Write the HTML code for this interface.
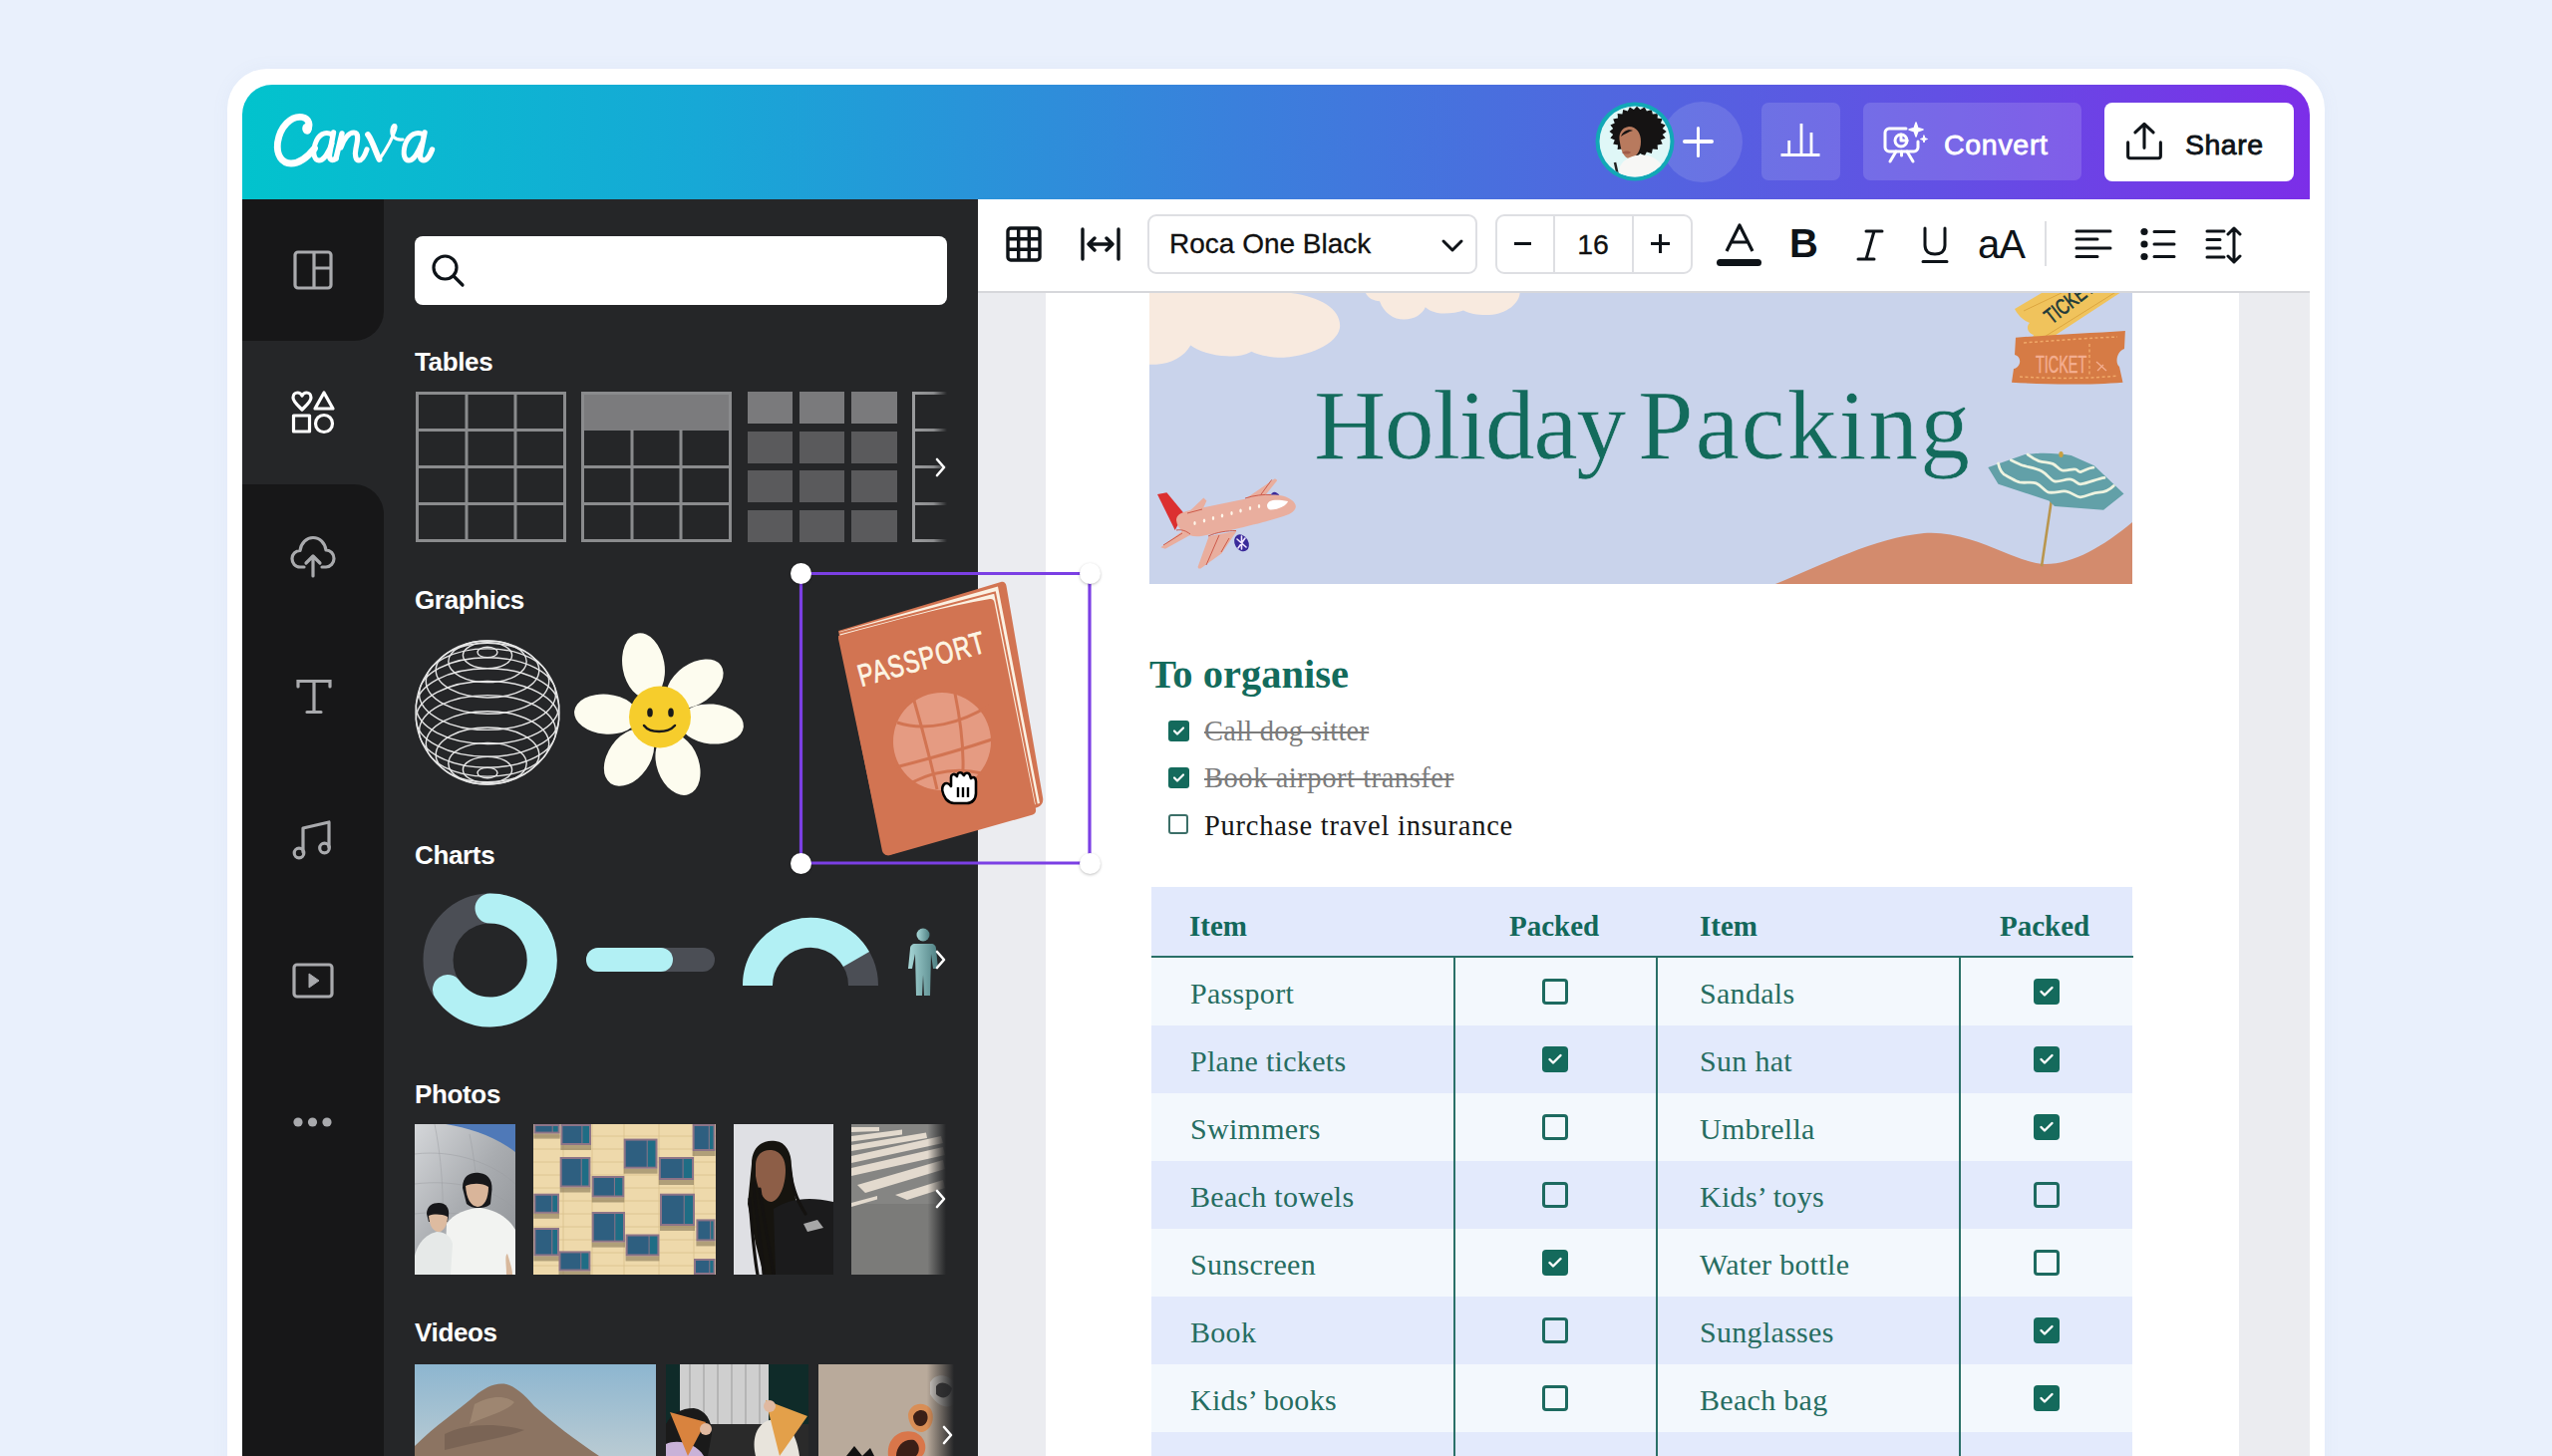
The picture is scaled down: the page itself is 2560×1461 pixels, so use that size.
<!DOCTYPE html>
<html><head><meta charset="utf-8">
<style>
*{margin:0;padding:0;box-sizing:border-box}
html,body{width:2560px;height:1461px;overflow:hidden}
body{background:#e9f0fc;position:relative;font-family:"Liberation Sans",sans-serif}
.a{position:absolute}
.serif{font-family:"Liberation Serif",serif}
#frame{left:228px;top:69px;width:2104px;height:1500px;background:#fff;border-radius:40px;box-shadow:0 0 18px rgba(120,140,190,.06)}
#header{left:243px;top:85px;width:2074px;height:115px;border-radius:30px 30px 0 0;background:linear-gradient(90deg,#02c3cd 0%,#17a8d6 22%,#3a80dc 48%,#5067df 66%,#6250e4 82%,#7c2ee8 100%)}
#rail{left:243px;top:200px;width:142px;height:1300px;background:#252628}
#panel{left:385px;top:200px;width:596px;height:1300px;background:#252628}
#toolbar{left:981px;top:200px;width:1336px;height:94px;background:#fff;border-bottom:2px solid #d6d7db}
#canvas{left:981px;top:294px;width:1336px;height:1200px;background:#ebecf0}
#page{left:1049px;top:294px;width:1197px;height:1200px;background:#fff}
.sel{left:243px;top:342px;width:142px;height:144px;background:#252628}
.rtop{left:355px;top:312px;width:30px;height:30px;background:#171718;border-radius:0 0 30px 0}
.hdr{color:#fff;font-weight:bold;font-size:26px;line-height:1;letter-spacing:-0.35px}
.tb{font-size:28px;color:#111}
.td{font-size:30px;color:#266d61;line-height:1;letter-spacing:0.3px}
.th{font-size:29px;color:#13685b;font-weight:bold;line-height:1}
.cb{width:26px;height:26px;border:3px solid #146a5c;border-radius:4px}
.cbf{width:26px;height:26px;background:#146a5c;border-radius:4px}
</style></head>
<body>
<div class="a" id="frame"></div>
<div class="a" id="header"></div>
<div class="a" id="rail"></div>
<div class="a" id="panel"></div>
<div class="a" id="canvas"></div>
<div class="a" id="page"></div>
<div class="a" id="toolbar"></div>


<!-- RAIL -->
<div class="a" style="left:243px;top:342px;width:142px;height:144px;background:#252628"></div>
<div class="a" style="left:243px;top:200px;width:142px;height:142px;background:#171718;border-radius:0 0 30px 0"></div>
<div class="a" style="left:243px;top:486px;width:142px;height:1000px;background:#171718;border-radius:0 30px 0 0"></div>
<svg class="a" style="left:294px;top:251px" width="40" height="40" viewBox="0 0 40 40" fill="none" stroke="#a9aaad" stroke-width="3.2" stroke-linejoin="round">
<rect x="2" y="2" width="36" height="36" rx="3"/><path d="M21 2 V38 M21 18 H38"/>
</svg>
<svg class="a" style="left:291px;top:391px" width="46" height="46" viewBox="0 0 46 46" fill="none" stroke="#fff" stroke-width="3.2" stroke-linejoin="round">
<path d="M12 20 C8 16 3 12 3 8 C3 5 5 3 7.5 3 C9.5 3 11 4 12 6 C13 4 14.5 3 16.5 3 C19 3 21 5 21 8 C21 12 16 16 12 20Z"/>
<path d="M34 3 L43 19 H25 Z"/>
<rect x="3.5" y="26" width="16" height="16"/>
<circle cx="34" cy="34" r="8.5"/>
</svg>
<svg class="a" style="left:290px;top:536px" width="48" height="44" viewBox="0 0 48 44" fill="none" stroke="#a9aaad" stroke-width="3.2" stroke-linecap="round" stroke-linejoin="round">
<path d="M15 33 H11 C6 33 3 29 3 24.5 C3 20 6.5 16.5 11 16.5 C12 9 17.5 3.5 24 3.5 C31 3.5 36 9 37 16 C41.5 16 45 19.5 45 24.5 C45 29 41.5 33 37 33 H33"/>
<path d="M24 42 V22 M17 29 L24 22 L31 29"/>
</svg>
<svg class="a" style="left:296px;top:680px" width="38" height="38" viewBox="0 0 38 38" fill="none" stroke="#a9aaad" stroke-width="3.2" stroke-linecap="round">
<path d="M3 9 V3.5 H35 V9 M19 3.5 V34.5 M12 34.5 H26"/>
</svg>
<svg class="a" style="left:292px;top:821px" width="44" height="42" viewBox="0 0 44 42" fill="none" stroke="#a9aaad" stroke-width="3.2" stroke-linecap="round" stroke-linejoin="round">
<path d="M12 34 V10 L38 4 V29"/>
<circle cx="8" cy="35" r="4.8"/><circle cx="33.5" cy="30" r="4.8"/>
</svg>
<svg class="a" style="left:292px;top:964px" width="46" height="40" viewBox="0 0 46 40" fill="none" stroke="#a9aaad" stroke-width="3.2" stroke-linejoin="round">
<rect x="3" y="4" width="38" height="32" rx="3"/><path d="M18 13 L28 20 L18 27 Z" fill="#a9aaad" stroke-width="1"/>
</svg>
<svg class="a" style="left:292px;top:1116px" width="44" height="20" viewBox="0 0 44 20" fill="#a9aaad">
<circle cx="7" cy="10" r="4.6"/><circle cx="21.5" cy="10" r="4.6"/><circle cx="36" cy="10" r="4.6"/>
</svg>


<!-- PANEL -->
<div class="a" style="left:416px;top:237px;width:534px;height:69px;background:#fff;border-radius:8px"></div>
<svg class="a" style="left:432px;top:254px" width="36" height="36" viewBox="0 0 36 36" fill="none" stroke="#0e1318" stroke-width="3.2" stroke-linecap="round">
<circle cx="14.5" cy="14.5" r="11.5"/><path d="M23 23 L32 32"/>
</svg>
<div class="a hdr" style="left:416px;top:350px">Tables</div>
<svg class="a" style="left:416px;top:392px" width="540" height="154" viewBox="416 392 540 154">
<g fill="none" stroke="#8a8b8d" stroke-width="3">
<rect x="418.5" y="394.5" width="148" height="148"/>
<path d="M468 394 V543 M517 394 V543 M418 431.5 H567 M418 468.5 H567 M418 505.5 H567"/>
</g>
<rect x="583" y="393" width="151" height="39" fill="#7b7b7d"/>
<g fill="none" stroke="#8a8b8d" stroke-width="3">
<rect x="584.5" y="394.5" width="148" height="148"/>
<path d="M634 431 V543 M683 431 V543 M584 468.5 H733 M584 505.5 H733"/>
</g>
<g fill="#5a5a5c">
<rect x="750" y="393" width="45" height="32" fill="#7a7a7c"/><rect x="802" y="393" width="45" height="32" fill="#7a7a7c"/><rect x="854" y="393" width="46" height="32" fill="#7a7a7c"/>
<rect x="750" y="433" width="45" height="32"/><rect x="802" y="433" width="45" height="32"/><rect x="854" y="433" width="46" height="32"/>
<rect x="750" y="472" width="45" height="32"/><rect x="802" y="472" width="45" height="32"/><rect x="854" y="472" width="46" height="32"/>
<rect x="750" y="512" width="45" height="32"/><rect x="802" y="512" width="45" height="32"/><rect x="854" y="512" width="46" height="32"/>
</g>
<defs><linearGradient id="fd" x1="0" x2="1"><stop offset="0" stop-color="#9a9b9d"/><stop offset="0.6" stop-color="#8a8b8d"/><stop offset="1" stop-color="#252628"/></linearGradient></defs>
<g fill="none" stroke="url(#fd)" stroke-width="3">
<path d="M950 394.5 H916.5 V542.5 H950 M916 431.5 H950 M916 468.5 H950 M916 505.5 H950"/>
</g>
</svg>
<svg class="a" style="left:934px;top:456px" width="20" height="26" viewBox="0 0 20 26" fill="none" stroke="#fff" stroke-width="2.6" stroke-linecap="round" stroke-linejoin="round"><path d="M6 5 L13 13 L6 21"/></svg>

<div class="a hdr" style="left:416px;top:589px">Graphics</div>
<!-- sphere -->
<svg class="a" style="left:413px;top:639px" width="152" height="152" viewBox="-76 -76 152 152"><g fill="none" stroke="#e6e6e6" stroke-width="1.4"><circle cx="0" cy="0" r="72"/><ellipse cx="0" cy="60.5" rx="10.0" ry="5.3"/><ellipse cx="0" cy="57.4" rx="24.6" ry="13.0"/><ellipse cx="0" cy="51.2" rx="39.2" ry="20.8"/><ellipse cx="0" cy="42.4" rx="51.8" ry="27.4"/><ellipse cx="0" cy="31.4" rx="61.7" ry="32.7"/><ellipse cx="0" cy="18.9" rx="68.5" ry="36.3"/><ellipse cx="0" cy="6.4" rx="71.6" ry="37.9"/><ellipse cx="0" cy="-6.4" rx="71.6" ry="37.9"/><ellipse cx="0" cy="-18.9" rx="68.5" ry="36.3"/><ellipse cx="0" cy="-31.4" rx="61.7" ry="32.7"/><ellipse cx="0" cy="-42.4" rx="51.8" ry="27.4"/><ellipse cx="0" cy="-51.2" rx="39.2" ry="20.8"/><ellipse cx="0" cy="-57.4" rx="24.6" ry="13.0"/><ellipse cx="0" cy="-60.5" rx="10.0" ry="5.3"/></g></svg>
<!-- flower -->
<svg class="a" style="left:576px;top:634px" width="180" height="170" viewBox="0 0 180 170">
<g fill="#fdfcef">
<ellipse cx="69.5" cy="34" rx="21" ry="33" transform="rotate(-10 69.5 34)"/>
<ellipse cx="121" cy="52" rx="20" ry="32" transform="rotate(55 121 52)"/>
<ellipse cx="138" cy="92.5" rx="20" ry="32" transform="rotate(95 138 92.5)"/>
<ellipse cx="104" cy="133" rx="21" ry="32" transform="rotate(-20 104 133)"/>
<ellipse cx="55" cy="126" rx="21" ry="32" transform="rotate(35 55 126)"/>
<ellipse cx="32" cy="82.6" rx="20" ry="32" transform="rotate(-85 32 82.6)"/>
</g>
<circle cx="86" cy="85.4" r="31" fill="#f6cd2c"/>
<ellipse cx="76" cy="81" rx="2.8" ry="4.6" fill="#1a1a1a"/><ellipse cx="97" cy="81" rx="2.8" ry="4.6" fill="#1a1a1a"/>
<path d="M70 94 C76 102 94 102 101 94" fill="none" stroke="#1a1a1a" stroke-width="2.5" stroke-linecap="round"/>
</svg>

<div class="a hdr" style="left:416px;top:845px">Charts</div>
<svg class="a" style="left:420px;top:892px" width="530" height="140" viewBox="420 892 530 140">
<circle cx="491.5" cy="963.5" r="52" fill="none" stroke="#4b4e55" stroke-width="30"/>
<path d="M491.5 911.5 A52 52 0 1 1 449 993" fill="none" stroke="#b2f0f4" stroke-width="30" stroke-linecap="round"/>
<rect x="588" y="951" width="129" height="24" rx="12" fill="#4b4e55"/>
<rect x="588" y="951" width="87" height="24" rx="12" fill="#b2f0f4"/>
<path d="M760 989 A53 53 0 0 1 866 989" fill="none" stroke="#4b4e55" stroke-width="30"/>
<path d="M760 989 A53 53 0 0 1 859 962.5" fill="none" stroke="#b2f0f4" stroke-width="30"/>
<defs><linearGradient id="pg" x1="0" x2="1"><stop offset="0" stop-color="#a8d8d8"/><stop offset="1" stop-color="#4e7f82"/></linearGradient></defs>
<g fill="url(#pg)">
<circle cx="926" cy="938" r="6.5"/>
<path d="M918 947 H934 C937 947 939 949 939 952 L941 972 L936 972 L934 957 L933 999 L927 999 L926 978 L925 999 L919 999 L918 957 L915 972 L911 972 L913 952 C913 949 915 947 918 947 Z"/>
</g>
</svg>
<svg class="a" style="left:934px;top:950px" width="20" height="26" viewBox="0 0 20 26" fill="none" stroke="#fff" stroke-width="2.6" stroke-linecap="round" stroke-linejoin="round"><path d="M6 5 L13 13 L6 21"/></svg>

<div class="a hdr" style="left:416px;top:1085px">Photos</div>
<div class="a hdr" style="left:416px;top:1324px">Videos</div>


<!-- PHOTOS -->
<svg class="a" style="left:416px;top:1128px" width="101" height="151" viewBox="0 0 101 151">
<defs><linearGradient id="p1g" x1="0" y1="0" x2="1" y2="1"><stop offset="0" stop-color="#d4d6d9"/><stop offset="0.5" stop-color="#a9acb0"/><stop offset="1" stop-color="#8d9094"/></linearGradient></defs>
<rect width="101" height="151" fill="url(#p1g)"/>
<path d="M31 0 H101 V28 C80 12 55 4 31 0Z" fill="#4f79b8"/>
<g stroke="#9a9da1" stroke-width="0.8" fill="none" opacity=".6"><path d="M0 30 C40 25 80 40 101 60 M0 60 C40 55 80 65 101 85 M0 90 C40 85 80 95 101 110 M20 0 C30 50 30 100 25 151 M55 10 C65 60 65 100 60 151"/></g>
<path d="M48 64 C48 50 58 48 65 49 C75 50 79 58 77 70 L76 80 C72 85 58 86 52 80Z" fill="#17171a"/>
<path d="M51 62 C52 75 56 82 63 83 C70 83 74 74 74 63 C68 59 58 59 51 62Z" fill="#d9b59a"/>
<path d="M12 90 C12 82 18 79 24 79 C32 79 35 85 34 92 L33 98 L14 98Z" fill="#17171a"/>
<path d="M14 92 C15 103 19 108 24 108 C29 108 33 101 33 93 C27 90 19 90 14 92Z" fill="#ddbba0"/>
<path d="M30 151 L32 100 C38 90 54 84 66 84 C82 86 94 94 101 106 V151Z" fill="#f2f3f1"/>
<path d="M0 151 V132 C4 116 14 110 22 108 C30 108 36 112 38 120 L36 151Z" fill="#e6e9e8"/>
<path d="M93 130 C96 140 98 146 98 151 H92 C92 140 90 132 93 130Z" fill="#d8b89c"/>
</svg>
<svg class="a" style="left:535px;top:1128px" width="183" height="151" viewBox="535 1128 183 151">
<rect x="535" y="1128" width="183" height="151" fill="#eed9ab"/>
<g stroke="#d8c08e" stroke-width="0.8"><path d="M535 1140 H718 M535 1153 H718 M535 1166 H718 M535 1179 H718 M535 1192 H718 M535 1205 H718 M535 1218 H718 M535 1231 H718 M535 1244 H718 M535 1257 H718 M535 1270 H718 M565 1128 V1279 M594 1128 V1279 M626 1128 V1279 M661 1128 V1279 M696 1128 V1279"/></g>
<g>
<rect x="535.4" y="1137.6" width="26.3" height="5" fill="#7e7050" opacity=".55"/><rect x="535.4" y="1128.0" width="26.3" height="9.6" fill="#8d7487"/><rect x="537.4" y="1130.0" width="16.3" height="5.6" fill="#2e5f80"/><rect x="554.7" y="1130.0" width="5.0" height="5.6" fill="#1f6d85"/><rect x="562.4" y="1149.0" width="30.6" height="5" fill="#7e7050" opacity=".55"/><rect x="562.4" y="1128.0" width="30.6" height="21.0" fill="#8d7487"/><rect x="564.4" y="1130.0" width="19.0" height="17.0" fill="#2e5f80"/><rect x="584.4" y="1130.0" width="6.6" height="17.0" fill="#1f6d85"/><rect x="625.7" y="1172.7" width="33.8" height="5" fill="#7e7050" opacity=".55"/><rect x="625.7" y="1142.6" width="33.8" height="30.1" fill="#8d7487"/><rect x="627.7" y="1144.6" width="21.0" height="26.1" fill="#2e5f80"/><rect x="649.7" y="1144.6" width="7.8" height="26.1" fill="#1f6d85"/><rect x="694.6" y="1155.0" width="22.9" height="5" fill="#7e7050" opacity=".55"/><rect x="694.6" y="1128.0" width="22.9" height="27.0" fill="#8d7487"/><rect x="696.6" y="1130.0" width="14.2" height="23.0" fill="#2e5f80"/><rect x="711.8" y="1130.0" width="3.7" height="23.0" fill="#1f6d85"/><rect x="561.7" y="1191.5" width="30.7" height="5" fill="#7e7050" opacity=".55"/><rect x="561.7" y="1161.0" width="30.7" height="30.5" fill="#8d7487"/><rect x="563.7" y="1163.0" width="19.0" height="26.5" fill="#2e5f80"/><rect x="583.7" y="1163.0" width="6.7" height="26.5" fill="#1f6d85"/><rect x="660.8" y="1184.0" width="35.2" height="5" fill="#7e7050" opacity=".55"/><rect x="660.8" y="1161.0" width="35.2" height="23.0" fill="#8d7487"/><rect x="662.8" y="1163.0" width="21.8" height="19.0" fill="#2e5f80"/><rect x="685.6" y="1163.0" width="8.4" height="19.0" fill="#1f6d85"/><rect x="593.7" y="1201.5" width="32.6" height="5" fill="#7e7050" opacity=".55"/><rect x="593.7" y="1180.0" width="32.6" height="21.5" fill="#8d7487"/><rect x="595.7" y="1182.0" width="20.2" height="17.5" fill="#2e5f80"/><rect x="616.9" y="1182.0" width="7.4" height="17.5" fill="#1f6d85"/><rect x="535.4" y="1217.8" width="25.6" height="5" fill="#7e7050" opacity=".55"/><rect x="535.4" y="1197.7" width="25.6" height="20.1" fill="#8d7487"/><rect x="537.4" y="1199.7" width="15.9" height="16.1" fill="#2e5f80"/><rect x="554.3" y="1199.7" width="4.7" height="16.1" fill="#1f6d85"/><rect x="662.0" y="1230.0" width="35.0" height="5" fill="#7e7050" opacity=".55"/><rect x="662.0" y="1197.7" width="35.0" height="32.3" fill="#8d7487"/><rect x="664.0" y="1199.7" width="21.7" height="28.3" fill="#2e5f80"/><rect x="686.7" y="1199.7" width="8.3" height="28.3" fill="#1f6d85"/><rect x="593.7" y="1246.6" width="33.3" height="5" fill="#7e7050" opacity=".55"/><rect x="593.7" y="1216.0" width="33.3" height="30.6" fill="#8d7487"/><rect x="595.7" y="1218.0" width="20.6" height="26.6" fill="#2e5f80"/><rect x="617.3" y="1218.0" width="7.7" height="26.6" fill="#1f6d85"/><rect x="535.4" y="1260.4" width="25.6" height="5" fill="#7e7050" opacity=".55"/><rect x="535.4" y="1232.0" width="25.6" height="28.4" fill="#8d7487"/><rect x="537.4" y="1234.0" width="15.9" height="24.4" fill="#2e5f80"/><rect x="554.3" y="1234.0" width="4.7" height="24.4" fill="#1f6d85"/><rect x="698.4" y="1245.4" width="19.1" height="5" fill="#7e7050" opacity=".55"/><rect x="698.4" y="1223.4" width="19.1" height="22.0" fill="#8d7487"/><rect x="700.4" y="1225.4" width="11.8" height="18.0" fill="#2e5f80"/><rect x="713.2" y="1225.4" width="2.3" height="18.0" fill="#1f6d85"/><rect x="627.6" y="1260.4" width="33.8" height="5" fill="#7e7050" opacity=".55"/><rect x="627.6" y="1238.5" width="33.8" height="21.9" fill="#8d7487"/><rect x="629.6" y="1240.5" width="21.0" height="17.9" fill="#2e5f80"/><rect x="651.6" y="1240.5" width="7.8" height="17.9" fill="#1f6d85"/><rect x="560.5" y="1275.5" width="31.9" height="5" fill="#7e7050" opacity=".55"/><rect x="560.5" y="1255.4" width="31.9" height="20.1" fill="#8d7487"/><rect x="562.5" y="1257.4" width="19.8" height="16.1" fill="#2e5f80"/><rect x="583.3" y="1257.4" width="7.1" height="16.1" fill="#1f6d85"/><rect x="696.0" y="1279.0" width="21.5" height="5" fill="#7e7050" opacity=".55"/><rect x="696.0" y="1263.0" width="21.5" height="16.0" fill="#8d7487"/><rect x="698.0" y="1265.0" width="13.3" height="12.0" fill="#2e5f80"/><rect x="712.3" y="1265.0" width="3.2" height="12.0" fill="#1f6d85"/></g></svg>
<svg class="a" style="left:736px;top:1128px" width="100" height="151" viewBox="0 0 100 151">
<rect width="100" height="151" fill="#dfe0e4"/>
<path d="M18 40 C18 22 30 15 42 17 C52 18 58 28 58 42 L62 75 L66 151 H30 L22 120 L14 80 Z" fill="#16140f"/>
<path d="M22 42 C22 30 30 25 38 26 C48 27 52 36 52 46 C52 62 46 76 38 78 C30 78 24 66 22 52Z" fill="#8d5e47"/>
<path d="M40 85 C55 75 75 72 100 78 V151 H42 Z" fill="#1b1b1c"/>
<path d="M70 100 L84 96 L90 104 L74 108Z" fill="#e2e2e2" opacity=".7"/>
<g stroke="#141210" stroke-width="3.2" fill="none" stroke-linecap="round"><path d="M20 60 C22 90 28 120 30 150 M26 65 C30 95 36 125 40 151 M16 75 C18 100 20 130 24 151 M56 45 C60 70 66 80 72 90"/></g>
</svg>
<svg class="a" style="left:854px;top:1128px" width="98" height="151" viewBox="0 0 98 151">
<defs><linearGradient id="p4f" x1="0" x2="1"><stop offset="0" stop-color="#252628" stop-opacity="0"/><stop offset="0.78" stop-color="#252628" stop-opacity="0"/><stop offset="0.97" stop-color="#252628" stop-opacity="1"/></linearGradient></defs>
<rect width="98" height="151" fill="#7b7b79"/>
<rect width="98" height="80" fill="#858583"/>
<g fill="#e3dace">
<path d="M0 3 L28 3 L28 7 L0 8Z"/>
<path d="M0 12 L51 5.5 L51 10.5 L0 17.5Z"/>
<path d="M0 21 L75 8.5 L76 14 L0 27Z"/>
<path d="M0 32 L90 12 L92 19 L0 39Z"/>
<path d="M0 44 L92 23 L94 31 L0 52Z"/>
<path d="M6 61 L92 36 L94 45 L14 69Z"/>
<path d="M44 71 L92 56 L94 64 L56 76Z"/>
<path d="M0 79 L26 72 L26 75.5 L0 83Z"/>
</g>
<rect width="98" height="151" fill="url(#p4f)"/>
</svg>
<svg class="a" style="left:934px;top:1190px" width="20" height="26" viewBox="0 0 20 26" fill="none" stroke="#fff" stroke-width="2.6" stroke-linecap="round" stroke-linejoin="round"><path d="M6 5 L13 13 L6 21"/></svg>
<!-- VIDEOS -->
<svg class="a" style="left:416px;top:1369px" width="242" height="92" viewBox="0 0 242 92">
<defs><linearGradient id="v1s" x1="0" y1="0" x2="0" y2="1"><stop offset="0" stop-color="#8db6d0"/><stop offset="1" stop-color="#b9cbd3"/></linearGradient></defs>
<rect width="242" height="92" fill="url(#v1s)"/>
<path d="M0 82 C20 62 45 45 60 32 C70 24 80 18 92 20 C100 22 110 30 120 42 C140 60 160 75 185 92 H0Z" fill="#8c7462"/>
<path d="M60 40 C75 32 90 30 100 38 C92 48 70 52 55 60Z" fill="#a58e78" opacity=".7"/>
<path d="M30 70 C50 60 80 58 110 66 C90 74 60 78 30 86Z" fill="#6e5a4c" opacity=".6"/>
</svg>
<svg class="a" style="left:668px;top:1369px" width="143" height="92" viewBox="0 0 143 92">
<rect width="143" height="92" fill="#0f2b29"/>
<rect x="14" y="0" width="89" height="60" fill="#cfcfcf"/>
<g stroke="#b5b5b5" stroke-width="2"><path d="M24 0 V60 M38 0 V60 M52 0 V60 M66 0 V60 M80 0 V60 M94 0 V60"/></g>
<rect x="0" y="60" width="143" height="32" fill="#2a2a2a"/>
<path d="M0 60 C5 50 15 44 28 44 C40 46 46 56 46 70 L42 92 H0Z" fill="#1a1a1a"/>
<path d="M0 80 C10 75 30 78 38 92 H0Z" fill="#c9b2d8"/>
<path d="M4 48 L40 58 L22 92 Z" fill="#d9833e"/>
<path d="M90 92 C86 76 90 60 104 56 C118 54 130 64 134 92Z" fill="#e8e4dc"/>
<path d="M100 36 L142 52 L114 92 Z" fill="#e3a04a"/>
<circle cx="104" cy="42" r="6" fill="#e0b9a0"/>
<circle cx="40" cy="65" r="6" fill="#e0b9a0"/>
</svg>
<svg class="a" style="left:821px;top:1369px" width="136" height="92" viewBox="0 0 136 92">
<defs><linearGradient id="v3f" x1="0" x2="1"><stop offset="0" stop-color="#252628" stop-opacity="0"/><stop offset="0.8" stop-color="#252628" stop-opacity="0"/><stop offset="1" stop-color="#252628" stop-opacity="1"/></linearGradient></defs>
<rect width="136" height="92" fill="#b9aa9b"/>
<path d="M112 18 C118 8 130 10 136 18 V40 C128 46 118 40 112 30Z" fill="#cfcac4"/>
<path d="M118 22 C122 16 130 18 134 24 C132 34 124 36 118 30Z" fill="#3a3838"/>
<path d="M90 50 C92 40 104 36 112 44 C118 52 114 66 104 68 C96 68 90 60 90 50Z" fill="#d98e56"/>
<path d="M95 52 C97 46 104 44 108 48 C112 54 108 62 102 62 C98 62 95 58 95 52Z" fill="#3b1f17"/>
<path d="M70 92 C68 76 80 64 96 68 C108 72 110 86 104 92Z" fill="#d9764a"/>
<path d="M78 92 C78 82 86 74 96 76 C102 80 102 88 98 92Z" fill="#3b1f17"/>
<path d="M28 92 L36 82 L44 92 L52 84 L56 92Z" fill="#111"/>
<rect width="136" height="92" fill="url(#v3f)"/>
</svg>
<svg class="a" style="left:941px;top:1427px" width="20" height="26" viewBox="0 0 20 26" fill="none" stroke="#fff" stroke-width="2.6" stroke-linecap="round" stroke-linejoin="round"><path d="M6 5 L13 13 L6 21"/></svg>


<!-- TOOLBAR -->
<svg class="a" style="left:1008px;top:226px" width="38" height="38" viewBox="0 0 38 38" fill="none" stroke="#0e1318" stroke-width="3.4" stroke-linejoin="round">
<rect x="3" y="3" width="32" height="32" rx="3"/><path d="M13.7 3 V35 M24.3 3 V35 M3 13.7 H35 M3 24.3 H35"/>
</svg>
<svg class="a" style="left:1082px;top:226px" width="44" height="38" viewBox="0 0 44 38" fill="none" stroke="#0e1318" stroke-width="3.4" stroke-linecap="round" stroke-linejoin="round">
<path d="M4 4 V34 M40 4 V34 M11 19 H33 M16 13 L10 19 L16 25 M28 13 L34 19 L28 25"/>
</svg>
<div class="a" style="left:1151px;top:215px;width:331px;height:60px;border:2px solid #dedfe3;border-radius:9px"></div>
<div class="a tb" style="left:1173px;top:229px;line-height:32px;font-size:28px;letter-spacing:0px;-webkit-text-stroke:0.3px #111">Roca One Black</div>
<svg class="a" style="left:1444px;top:236px" width="26" height="20" viewBox="0 0 26 20" fill="none" stroke="#0e1318" stroke-width="3" stroke-linecap="round" stroke-linejoin="round"><path d="M4 6 L13 15 L22 6"/></svg>
<div class="a" style="left:1500px;top:215px;width:198px;height:60px;border:2px solid #dedfe3;border-radius:9px"></div>
<div class="a" style="left:1558px;top:215px;width:2px;height:60px;background:#dedfe3"></div>
<div class="a" style="left:1637px;top:215px;width:2px;height:60px;background:#dedfe3"></div>
<div class="a" style="left:1519px;top:243px;width:17px;height:3px;background:#0e1318"></div>
<div class="a tb" style="left:1559px;top:229px;width:78px;text-align:center;line-height:32px;font-size:28.5px;-webkit-text-stroke:0.3px #111">16</div>
<div class="a" style="left:1656px;top:243px;width:19px;height:3px;background:#0e1318"></div>
<div class="a" style="left:1664px;top:235px;width:3px;height:19px;background:#0e1318"></div>
<svg class="a" style="left:1718px;top:222px" width="54" height="50" viewBox="0 0 54 50" fill="none">
<path d="M14 30 L27 4 L40 30 M18.5 21 H35.5" stroke="#0e1318" stroke-width="3.2" stroke-linejoin="round"/>
<rect x="4" y="38" width="45" height="7" rx="3.5" fill="#0e1318"/>
</svg>
<div class="a" style="left:1795px;top:222px;font-size:40px;font-weight:bold;color:#0e1318;line-height:44px">B</div>
<svg class="a" style="left:1860px;top:228px" width="32" height="36" viewBox="0 0 32 36" fill="none" stroke="#0e1318" stroke-width="3" stroke-linecap="round">
<path d="M12 4 H28 M4 32 H20 M20 4 L12 32"/>
</svg>
<svg class="a" style="left:1926px;top:226px" width="30" height="40" viewBox="0 0 30 40" fill="none" stroke="#0e1318" stroke-width="3" stroke-linecap="round">
<path d="M5 3 V20 C5 26 9 29 15 29 C21 29 25 26 25 20 V3 M3 36.5 H27"/>
</svg>
<div class="a" style="left:1984px;top:223px;font-size:40px;color:#0e1318;line-height:44px;letter-spacing:-1px">aA</div>
<div class="a" style="left:2051px;top:222px;width:2px;height:45px;background:#dedfe3"></div>
<svg class="a" style="left:2080px;top:228px" width="40" height="34" viewBox="0 0 40 34" fill="none" stroke="#0e1318" stroke-width="3" stroke-linecap="round">
<path d="M3 4 H37 M3 12 H24 M3 21 H37 M3 29.5 H24"/>
</svg>
<svg class="a" style="left:2146px;top:228px" width="38" height="34" viewBox="0 0 38 34" fill="#0e1318" stroke="#0e1318" stroke-width="3" stroke-linecap="round">
<circle cx="5" cy="4.5" r="3.6" stroke="none"/><circle cx="5" cy="17" r="3.6" stroke="none"/><circle cx="5" cy="29.5" r="3.6" stroke="none"/>
<path d="M15 4.5 H35 M15 17 H35 M15 29.5 H35" fill="none"/>
</svg>
<svg class="a" style="left:2211px;top:226px" width="40" height="40" viewBox="0 0 40 40" fill="none" stroke="#0e1318" stroke-width="3" stroke-linecap="round" stroke-linejoin="round">
<path d="M3 6 H20 M3 14.5 H16 M3 23 H16 M3 32 H20 M30 3 V37 M24 9 L30 3 L36 9 M24 31 L30 37 L36 31"/>
</svg>


<!-- BANNER -->
<svg class="a" style="left:1153px;top:294px" width="986" height="292" viewBox="1153 294 986 292">
<rect x="1153" y="294" width="986" height="292" fill="#c9d3eb"/>
<path d="M1153 294 H1295 C1325 298 1344 310 1344.2 326.7 C1344 342 1320 356 1287.6 358.8 C1275 359 1262 356 1255.5 352.7 C1248 357 1238 358 1231 357.3 C1215 357 1202 352 1194.3 346.6 C1188 358 1175 365 1160 365.7 L1153 365.7 Z" fill="#f8eadf"/>
<path d="M1370 294 C1372 299 1378 302 1384 302.2 C1388 314 1398 320.6 1408.4 320.6 C1419 320.6 1427 315 1429.8 308.3 C1435 313 1442 314.5 1448.2 314.5 C1456 314.5 1463 313.5 1468 311.5 C1474 315 1485 316.5 1494 316 C1512 315 1524 304 1524.6 294 Z" fill="#f8eadf"/>
<path d="M1781 586 C1830 566 1880 540 1930 535 C1960 533 1985 544 2010 554 C2025 560 2040 566 2052 566 C2080 566 2110 548 2139 524 V586 Z" fill="#d38b6d"/>
<!-- umbrella -->
<path d="M2058.2 499.7 L2048 568.3" stroke="#b9964e" stroke-width="2.6"/>
<path d="M1994.3 469.1 L2031.3 456.1 C2040 455 2045 454.7 2049.9 454.7 C2060 455 2070 455.5 2077.7 457 L2100.8 467.2 L2130.5 495.5 L2110.1 511.7 L2061 508 L2055.4 502.5 L2004.5 485.8 Z" fill="#62a0a8"/>
<g fill="none" stroke="#eef3e0" stroke-width="2.8" stroke-linecap="round" stroke-linejoin="round">
<path d="M2004.5 465 C2006 472 2009 476 2012.8 477.4 C2018 480 2022 483 2025.8 483.9 C2032 485 2038 483 2042.5 484.9 C2048 487 2051 493 2055.4 494.1 C2062 495 2068 492 2073 493.2 C2079 494.5 2083 499 2087 498.8 C2094 498 2100 494 2105.5 494.1 C2112 494 2117 491 2120.3 487.6"/>
<path d="M2017.4 461.7 C2022 464 2026 466 2029.5 467.2 C2036 469 2043 470 2048 472.8 C2054 476 2057 482 2061 483 C2067 484 2072 480 2077.7 481.1 C2082 482 2084 486 2087 485.8 C2095 485 2104 480 2111 479.3"/>
<path d="M2034.1 456.1 C2038 459 2041 461 2045.2 462.6 C2050 464 2055 464 2059.1 465.4 C2063 467 2065 471 2068.4 471.9 C2074 473 2078 470 2082.3 471 C2084 471.5 2085 474 2087 473.7 C2092 472 2096 469 2100 469.1"/>
</g>
<ellipse cx="2067.5" cy="456" rx="2.2" ry="3" fill="#c9a040"/>
<!-- tickets -->
<defs><clipPath id="bclip"><rect x="1153" y="293" width="986" height="293"/></clipPath></defs>
<g clip-path="url(#bclip)">
<path d="M2021 310 L2075 278 L2140 250 L2150 275 L2128 293 L2044 348 C2040 344 2038 340 2040 336 C2034 334 2032 328 2036 324 C2030 322 2024 316 2021 310Z" fill="#f0c35c"/>
<path d="M2030 312 L2135 262 M2046 341 L2140 282" stroke="#dca640" stroke-width="1" fill="none"/>
<text x="0" y="0" font-family="Liberation Sans" font-size="22" fill="#1e3a3a" transform="translate(2058 326) rotate(-38) scale(0.72 1)" stroke="#1e3a3a" stroke-width="0.6">TICKET</text>
</g>
<path d="M2022 338.7 C2060 336 2100 334 2131.9 332 L2131 350 C2124 352 2121 364 2126 368 L2129.5 383.7 C2100 386 2060 386.5 2018 383.7 L2020 370 C2027 369 2029 358 2021 356 Z" fill="#d67b45"/>
<path d="M2030 344 C2070 341 2100 339 2124 338 M2026 378 C2060 380 2095 380 2125 377 M2096 345 V376" stroke="#f0a868" stroke-width="1.5" fill="none" stroke-dasharray="3 2.5"/>
<text x="0" y="0" font-family="Liberation Sans" font-size="24" fill="#f4ae90" transform="translate(2042 374) scale(0.6 1)" stroke="#f4ae90" stroke-width="0.5">TICKET</text>
<path d="M2103 363 L2113 372 M2104 372 L2110 366" stroke="#f4ae90" stroke-width="1.2"/>
<!-- airplane -->
<g>
<path d="M1161 496 L1170.4 494.2 L1187.8 515.3 L1178.7 532Z" fill="#dc3030"/>
<path d="M1249.7 500.2 L1278.4 480.6 C1280 480 1281.5 481.5 1280.7 482.8 L1267.8 498.7Z" fill="#e9ae9e"/>
<path d="M1274.6 497 C1276 493 1280 492 1283.7 497.5 L1280 499Z" fill="#3a2a9a"/>
<path d="M1190.8 515.3 L1207.4 499.5 L1210.4 502.5 L1205.9 512.3Z" fill="#e9ae9e"/>
<path d="M1164.4 549.3 L1186.3 532.7 L1194.6 536.5 L1168.9 550.8Z" fill="#e9ae9e"/>
<path d="M1180 522 C1180 516 1186 514 1194 512 L1262 498 C1275 495.5 1288 495.5 1296 502 C1302 507 1301 512 1293 516 C1275 523 1250 528 1235 532 L1205 538 C1192 540 1181 532 1180 522Z" fill="#e9ae9e"/>
<path d="M1212.7 538 L1240.6 532.7 L1225.5 555.3 L1204.4 570.5 C1202 571 1201 569 1202.1 567.4Z" fill="#e9ae9e"/>
<g stroke="#c9503f" stroke-width="0.9" fill="none">
<path d="M1249 500 C1258 497 1268 496 1275 496.5"/><path d="M1275.8 481.3 L1264.8 496.4"/>
<path d="M1212 538 C1220 534 1232 532.5 1240 532.5"/><path d="M1223 537 L1210 567"/><path d="M1233 540 L1225 554"/>
<path d="M1167 547 L1186 535"/><path d="M1180 532 C1186 531 1190 533 1194 536"/><path d="M1191 515 L1206 511"/>
</g>
<path d="M1271 507 C1272 502 1278 500.5 1292 503 C1290 509 1278 512 1274 511.5 C1272 511 1271 509 1271 507Z" fill="#fff"/>
<g fill="#fff6ea">
<ellipse cx="1198.5" cy="525" rx="1.2" ry="1.9"/><ellipse cx="1208" cy="522.5" rx="1.2" ry="1.9"/><ellipse cx="1217" cy="520" rx="1.2" ry="1.9"/><ellipse cx="1226" cy="517.5" rx="1.2" ry="1.9"/><ellipse cx="1235.5" cy="515" rx="1.2" ry="1.9"/><ellipse cx="1244.5" cy="512.5" rx="1.2" ry="1.9"/><ellipse cx="1254" cy="510" rx="1.2" ry="1.9"/><ellipse cx="1263" cy="508" rx="1.2" ry="1.9"/>
</g>
<ellipse cx="1245.5" cy="544.8" rx="6.8" ry="9" transform="rotate(-30 1245.5 544.8)" fill="#3a2a9a"/>
<g stroke="#f0e6ff" stroke-width="1.6" stroke-linecap="round"><path d="M1241 541 L1250 549 M1249 540 L1242 550 M1245.5 538 L1245.5 551"/></g>
</g></svg>
<div class="a serif" style="left:1318px;top:372px;font-size:100px;color:#136b5c;line-height:110px;white-space:nowrap;letter-spacing:-1.5px;-webkit-text-stroke:0.6px #c9d3eb">Holiday</div><div class="a serif" style="left:1643px;top:372px;font-size:100px;color:#136b5c;line-height:110px;white-space:nowrap;letter-spacing:1.8px;-webkit-text-stroke:0.6px #c9d3eb">Packing</div>

<!-- TO ORGANISE -->
<div class="a serif" style="left:1153px;top:654px;font-size:40.5px;color:#136b5c;font-weight:bold;line-height:46px;white-space:nowrap">To organise</div>
<div class="a cbf" style="left:1172px;top:723px;width:21px;height:21px;border-radius:3px"></div>
<svg class="a" style="left:1172px;top:723px" width="21" height="21" viewBox="0 0 21 21" fill="none" stroke="#fff" stroke-width="2.2" stroke-linecap="round" stroke-linejoin="round"><path d="M6 10.5 L9 13.5 L15 7.5"/></svg>
<div class="a serif" style="left:1208px;top:717px;font-size:28.5px;color:#7b7b7b;line-height:34px;letter-spacing:0.25px;text-decoration:line-through;text-decoration-thickness:1.6px;white-space:nowrap">Call dog sitter</div>
<div class="a cbf" style="left:1172px;top:770px;width:21px;height:21px;border-radius:3px"></div>
<svg class="a" style="left:1172px;top:770px" width="21" height="21" viewBox="0 0 21 21" fill="none" stroke="#fff" stroke-width="2.2" stroke-linecap="round" stroke-linejoin="round"><path d="M6 10.5 L9 13.5 L15 7.5"/></svg>
<div class="a serif" style="left:1208px;top:764px;font-size:28.5px;color:#7b7b7b;line-height:34px;letter-spacing:0.55px;text-decoration:line-through;text-decoration-thickness:1.6px;white-space:nowrap">Book airport transfer</div>
<div class="a" style="left:1172px;top:817px;width:20px;height:20px;border:2.5px solid #3c6f68;border-radius:3px"></div>
<div class="a serif" style="left:1208px;top:812px;font-size:28.5px;color:#161616;line-height:34px;letter-spacing:0.75px;white-space:nowrap">Purchase travel insurance</div>
<!-- TABLE -->
<div class="a" style="left:1155px;top:890px;width:984px;height:71px;background:#e2e9fc"></div>
<div class="a th serif" style="left:1193px;top:915px">Item</div>
<div class="a th serif" style="left:1514px;top:915px">Packed</div>
<div class="a th serif" style="left:1705px;top:915px">Item</div>
<div class="a th serif" style="left:2006px;top:915px">Packed</div>
<div class="a" style="left:1155px;top:961px;width:984px;height:68px;background:#f3f8fd"></div>
<div class="a td serif" style="left:1194px;top:982px;white-space:nowrap">Passport</div>
<div class="a td serif" style="left:1705px;top:982px;white-space:nowrap">Sandals</div>
<div class="a" style="left:1547px;top:982px;width:26px;height:26px;border:3px solid #1d6a60;border-radius:4px"></div>
<svg class="a" style="left:2040px;top:982px" width="26" height="26" viewBox="0 0 26 26"><rect width="26" height="26" rx="4" fill="#146a5c"/><path d="M7.5 13 L11 16.5 L18.5 9" fill="none" stroke="#fff" stroke-width="2.4" stroke-linecap="round" stroke-linejoin="round"/></svg>
<div class="a" style="left:1155px;top:1029px;width:984px;height:68px;background:#e3eafc"></div>
<div class="a td serif" style="left:1194px;top:1050px;white-space:nowrap">Plane tickets</div>
<div class="a td serif" style="left:1705px;top:1050px;white-space:nowrap">Sun hat</div>
<svg class="a" style="left:1547px;top:1050px" width="26" height="26" viewBox="0 0 26 26"><rect width="26" height="26" rx="4" fill="#146a5c"/><path d="M7.5 13 L11 16.5 L18.5 9" fill="none" stroke="#fff" stroke-width="2.4" stroke-linecap="round" stroke-linejoin="round"/></svg>
<svg class="a" style="left:2040px;top:1050px" width="26" height="26" viewBox="0 0 26 26"><rect width="26" height="26" rx="4" fill="#146a5c"/><path d="M7.5 13 L11 16.5 L18.5 9" fill="none" stroke="#fff" stroke-width="2.4" stroke-linecap="round" stroke-linejoin="round"/></svg>
<div class="a" style="left:1155px;top:1097px;width:984px;height:68px;background:#f3f8fd"></div>
<div class="a td serif" style="left:1194px;top:1118px;white-space:nowrap">Swimmers</div>
<div class="a td serif" style="left:1705px;top:1118px;white-space:nowrap">Umbrella</div>
<div class="a" style="left:1547px;top:1118px;width:26px;height:26px;border:3px solid #1d6a60;border-radius:4px"></div>
<svg class="a" style="left:2040px;top:1118px" width="26" height="26" viewBox="0 0 26 26"><rect width="26" height="26" rx="4" fill="#146a5c"/><path d="M7.5 13 L11 16.5 L18.5 9" fill="none" stroke="#fff" stroke-width="2.4" stroke-linecap="round" stroke-linejoin="round"/></svg>
<div class="a" style="left:1155px;top:1165px;width:984px;height:68px;background:#e3eafc"></div>
<div class="a td serif" style="left:1194px;top:1186px;white-space:nowrap">Beach towels</div>
<div class="a td serif" style="left:1705px;top:1186px;white-space:nowrap">Kids’ toys</div>
<div class="a" style="left:1547px;top:1186px;width:26px;height:26px;border:3px solid #1d6a60;border-radius:4px"></div>
<div class="a" style="left:2040px;top:1186px;width:26px;height:26px;border:3px solid #1d6a60;border-radius:4px"></div>
<div class="a" style="left:1155px;top:1233px;width:984px;height:68px;background:#f3f8fd"></div>
<div class="a td serif" style="left:1194px;top:1254px;white-space:nowrap">Sunscreen</div>
<div class="a td serif" style="left:1705px;top:1254px;white-space:nowrap">Water bottle</div>
<svg class="a" style="left:1547px;top:1254px" width="26" height="26" viewBox="0 0 26 26"><rect width="26" height="26" rx="4" fill="#146a5c"/><path d="M7.5 13 L11 16.5 L18.5 9" fill="none" stroke="#fff" stroke-width="2.4" stroke-linecap="round" stroke-linejoin="round"/></svg>
<div class="a" style="left:2040px;top:1254px;width:26px;height:26px;border:3px solid #1d6a60;border-radius:4px"></div>
<div class="a" style="left:1155px;top:1301px;width:984px;height:68px;background:#e3eafc"></div>
<div class="a td serif" style="left:1194px;top:1322px;white-space:nowrap">Book</div>
<div class="a td serif" style="left:1705px;top:1322px;white-space:nowrap">Sunglasses</div>
<div class="a" style="left:1547px;top:1322px;width:26px;height:26px;border:3px solid #1d6a60;border-radius:4px"></div>
<svg class="a" style="left:2040px;top:1322px" width="26" height="26" viewBox="0 0 26 26"><rect width="26" height="26" rx="4" fill="#146a5c"/><path d="M7.5 13 L11 16.5 L18.5 9" fill="none" stroke="#fff" stroke-width="2.4" stroke-linecap="round" stroke-linejoin="round"/></svg>
<div class="a" style="left:1155px;top:1369px;width:984px;height:68px;background:#f3f8fd"></div>
<div class="a td serif" style="left:1194px;top:1390px;white-space:nowrap">Kids’ books</div>
<div class="a td serif" style="left:1705px;top:1390px;white-space:nowrap">Beach bag</div>
<div class="a" style="left:1547px;top:1390px;width:26px;height:26px;border:3px solid #1d6a60;border-radius:4px"></div>
<svg class="a" style="left:2040px;top:1390px" width="26" height="26" viewBox="0 0 26 26"><rect width="26" height="26" rx="4" fill="#146a5c"/><path d="M7.5 13 L11 16.5 L18.5 9" fill="none" stroke="#fff" stroke-width="2.4" stroke-linecap="round" stroke-linejoin="round"/></svg>
<div class="a" style="left:1155px;top:1437px;width:984px;height:68px;background:#e3eafc"></div>
<div class="a" style="left:1155px;top:959px;width:985px;height:2px;background:#2a7068"></div>
<div class="a" style="left:1457.5px;top:960px;width:2px;height:520px;background:#2a7068"></div>
<div class="a" style="left:1660.5px;top:960px;width:2px;height:520px;background:#2a7068"></div>
<div class="a" style="left:1964.5px;top:960px;width:2px;height:520px;background:#2a7068"></div>


<!-- PASSPORT -->
<svg class="a" style="left:790px;top:565px" width="320" height="310" viewBox="790 565 320 310">
<path d="M803.5 575.5 H1093 V866 H803.5 Z" fill="none" stroke="#7b3fe4" stroke-width="3.2"/>
<path d="M841 633 L1004 584 C1007 583 1009 585 1009.5 588 L1046 800 C1047 805 1045 808 1041 810 L892 858 C889 859 886 857 885 854 Z" fill="#d27452"/>
<path d="M842 634 L1001 588.5 L1043 806 L1000 818 L890 856Z" fill="#fbf1e2"/>
<path d="M842 635.5 L998 594.5 L1040 808" fill="none" stroke="#d27452" stroke-width="2"/>
<path d="M841 638 C900 622 950 608 993 601 C995.5 600.5 997 602 997.5 604.5 L1039 812 C1039.5 814.5 1038.5 816.5 1036 817.5 L893 858 C890 859 887 857 886 854 L841 641 Z" fill="#d27452"/>
<circle cx="945" cy="744" r="49" fill="#e59b82"/>
<g fill="none" stroke="#d27452" stroke-width="3">
<path d="M900 725 C930 735 965 725 992 708"/>
<path d="M898 770 C930 762 965 752 995 742"/>
<path d="M915 696 C925 730 935 770 940 792"/>
<path d="M958 696 C965 730 968 760 965 790"/>
<path d="M915 785 C935 775 960 770 985 776"/>
</g>
<text x="0" y="0" font-family="Liberation Sans" font-size="31" fill="#fdf5e4" stroke="#fdf5e4" stroke-width="0.8" transform="translate(864 689) rotate(-15.5) scale(0.74 1)" letter-spacing="1.5">PASSPORT</text>
<!-- cursor -->
<g transform="translate(943 772)">
<path d="M6 30 C2 24 1 18 4 15 C6 13 9 14 11 17 L11 8 C11 5 14 4 16 6 L17 7 C17 3 21 2 23 5 L24 6 C25 3 29 3 30 6 L31 9 C33 7 36 8 36 12 L36 24 C36 30 32 34 27 34 L14 34 C11 34 8 32 6 30Z" fill="#fff" stroke="#000" stroke-width="2.6" stroke-linejoin="round"/>
<path d="M18 18 V28 M23 18 V28 M28 18 V28" stroke="#000" stroke-width="2.4"/>
</g>
</svg>
<div class="a" style="left:793px;top:565px;width:21px;height:21px;border-radius:50%;background:#fff;box-shadow:0 1px 3px rgba(0,0,0,.25)"></div>
<div class="a" style="left:1083px;top:565px;width:21px;height:21px;border-radius:50%;background:#fff;box-shadow:0 1px 3px rgba(0,0,0,.25)"></div>
<div class="a" style="left:793px;top:856px;width:21px;height:21px;border-radius:50%;background:#fff;box-shadow:0 1px 3px rgba(0,0,0,.25)"></div>
<div class="a" style="left:1083px;top:856px;width:21px;height:21px;border-radius:50%;background:#fff;box-shadow:0 1px 3px rgba(0,0,0,.25)"></div>

<!-- LOGO -->
<svg class="a" style="left:265px;top:105px" width="180" height="70" viewBox="265 105 180 70">
<g fill="none" stroke="#fff" stroke-linecap="round" stroke-linejoin="round">
<path d="M308.5 131 C311 126 311 119 303 117.5 C292 116 281 127 278.5 143 C277 156 283 164 292 164 C301 164 309 157 315.5 149" stroke-width="6.8"/>
<path d="M333 135 C326 131 319 135 316 145 C313 155 316 161 320 161 C325 161 330 152 333 144" stroke-width="5.0"/>
<path d="M334.5 133 L330.5 155 C330 160 333 162 337 159" stroke-width="5.4"/>
<path d="M337 159 L343 134" stroke-width="5.4"/>
<path d="M342 148 C345 139 350 133 355 133 C360 133 359 140 357 149 C355.5 156 357 161 360 161 C363 161 366 156 368 150" stroke-width="5.2"/>
<path d="M369 135 C373 140 377 153 380.5 160" stroke-width="5.8"/>
<path d="M380.5 160 C386 152 394 138 396.5 130 C398.5 124 394 124 393 130 C392 136 396 141 404 140" stroke-width="3.2"/>
<path d="M425 135 C418 131 410 135 406.5 145 C403.5 155 406 161 410 161 C415 161 420 152 423 144" stroke-width="5.0"/>
<path d="M426 133 L421.5 155 C421 160 424 162 427.5 160 C430 158 432 154 433.5 150" stroke-width="5.4"/>
</g>
<ellipse cx="308" cy="129" rx="4.8" ry="5.5" fill="#fff"/>
</svg>
<!-- AVATAR -->
<div class="a" style="left:1667px;top:102px;width:81px;height:81px;border-radius:50%;background:rgba(255,255,255,.12)"></div>
<svg class="a" style="left:1598px;top:101px" width="84" height="84" viewBox="0 0 84 84">
<defs><clipPath id="avc"><circle cx="42" cy="41" r="35.5"/></clipPath></defs>
<circle cx="42" cy="41" r="39.5" fill="#12a8b6"/>
<circle cx="42" cy="41" r="35.5" fill="#dff7f7"/>
<g clip-path="url(#avc)">
<path d="M73.7 31.0 L69.7 33.9 L72.7 37.5 L67.9 39.4 L69.7 43.6 L64.6 44.4 L65.0 48.9 L59.8 48.5 L58.9 52.9 L53.9 51.4 L51.7 55.4 L47.4 52.9 L44.0 56.3 L40.9 52.9 L36.9 55.4 L34.8 51.4 L30.3 52.9 L29.4 48.5 L24.6 48.9 L25.0 44.4 L20.2 43.6 L21.8 39.4 L17.4 37.5 L20.2 33.9 L16.5 31.0 L20.2 28.1 L17.4 24.5 L21.8 22.6 L20.2 18.4 L25.0 17.6 L24.6 13.1 L29.4 13.5 L30.2 9.1 L34.8 10.6 L36.9 6.6 L40.9 9.1 L44.0 5.7 L47.4 9.1 L51.7 6.6 L53.9 10.6 L58.9 9.1 L59.8 13.5 L65.0 13.1 L64.6 17.6 L69.7 18.3 L67.9 22.6 L72.7 24.5 L69.7 28.1Z" fill="#151313"/>
<path d="M27 42 C25 34 28 27 36 26 C44 26 48 33 48 41 C48 50 44 57 37 58 C31 58 28 50 27 42Z" fill="#b87a5e"/>
<path d="M28 36 C30 30 36 28 40 30 C36 31 31 34 28 36Z" fill="#151313"/>
<path d="M29 52 C32 50 36 50 38 52 C36 54 31 54 29 52Z" fill="#a05a48"/>
<path d="M27 66 C32 56 46 52 58 56 C68 60 74 70 74 84 L24 84 Z" fill="#f7f7f5"/>
<path d="M22 62 L26 80" stroke="#222" stroke-width="2.5"/>
</g>
</svg>
<div class="a" style="left:1688px;top:140px;width:31px;height:3.5px;background:#fff;border-radius:2px"></div>
<div class="a" style="left:1701.5px;top:127px;width:3.5px;height:31px;background:#fff;border-radius:2px"></div>
<!-- CHART BTN -->
<div class="a" style="left:1767px;top:103px;width:79px;height:78px;border-radius:7px;background:rgba(255,255,255,.13)"></div>
<svg class="a" style="left:1786px;top:119px" width="40" height="40" viewBox="0 0 40 40" fill="none" stroke="#fff" stroke-width="2.8" stroke-linecap="butt">
<path d="M0.5 36.5 H39.5"/><path d="M8.7 36 V22"/><path d="M21 36 V5"/><path d="M31 36 V14"/>
</svg>
<!-- CONVERT BTN -->
<div class="a" style="left:1869px;top:103px;width:219px;height:78px;border-radius:7px;background:rgba(255,255,255,.14)"></div>
<svg class="a" style="left:1886px;top:120px" width="50" height="50" viewBox="0 0 50 50" fill="none" stroke="#fff" stroke-width="3" stroke-linecap="round" stroke-linejoin="round">
<path d="M26 9 H9 C7 9 5 11 5 13 V28 C5 30 7 32 9 32 H34 C36 32 38 30 38 28 V22"/>
<path d="M16 32 L10 42 M27 32 L33 42 M21.5 32 V36"/>
<circle cx="21" cy="21" r="6"/>
<path d="M21 15 V21 H27" />
<path d="M36 3 L37.8 8.5 L43 10 L37.8 11.7 L36 17 L34.2 11.7 L29 10 L34.2 8.5 Z" fill="#fff" stroke-width="1.5"/>
<path d="M44 16 L44.9 18.6 L47.5 19.5 L44.9 20.4 L44 23 L43.1 20.4 L40.5 19.5 L43.1 18.6 Z" fill="#fff" stroke-width="1"/>
</svg>
<div class="a" style="left:1950px;top:126px;font-size:28.5px;color:#fff;-webkit-text-stroke:0.8px #fff;letter-spacing:0.7px;line-height:38px">Convert</div>
<!-- SHARE BTN -->
<div class="a" style="left:2111px;top:103px;width:190px;height:79px;border-radius:8px;background:#fff"></div>
<svg class="a" style="left:2131px;top:121px" width="40" height="42" viewBox="0 0 44 46" fill="none" stroke="#0e1318" stroke-width="3.4" stroke-linecap="round" stroke-linejoin="round">
<path d="M4 24 V39 C4 40.5 5 41.5 6.5 41.5 H37.5 C39 41.5 40 40.5 40 39 V24"/>
<path d="M22 30 V4 M12 13 L22 3.5 L32 13"/>
</svg>
<div class="a" style="left:2192px;top:126px;font-size:28.5px;color:#0e1318;-webkit-text-stroke:0.8px #0e1318;letter-spacing:0.5px;line-height:38px">Share</div>

</body></html>
